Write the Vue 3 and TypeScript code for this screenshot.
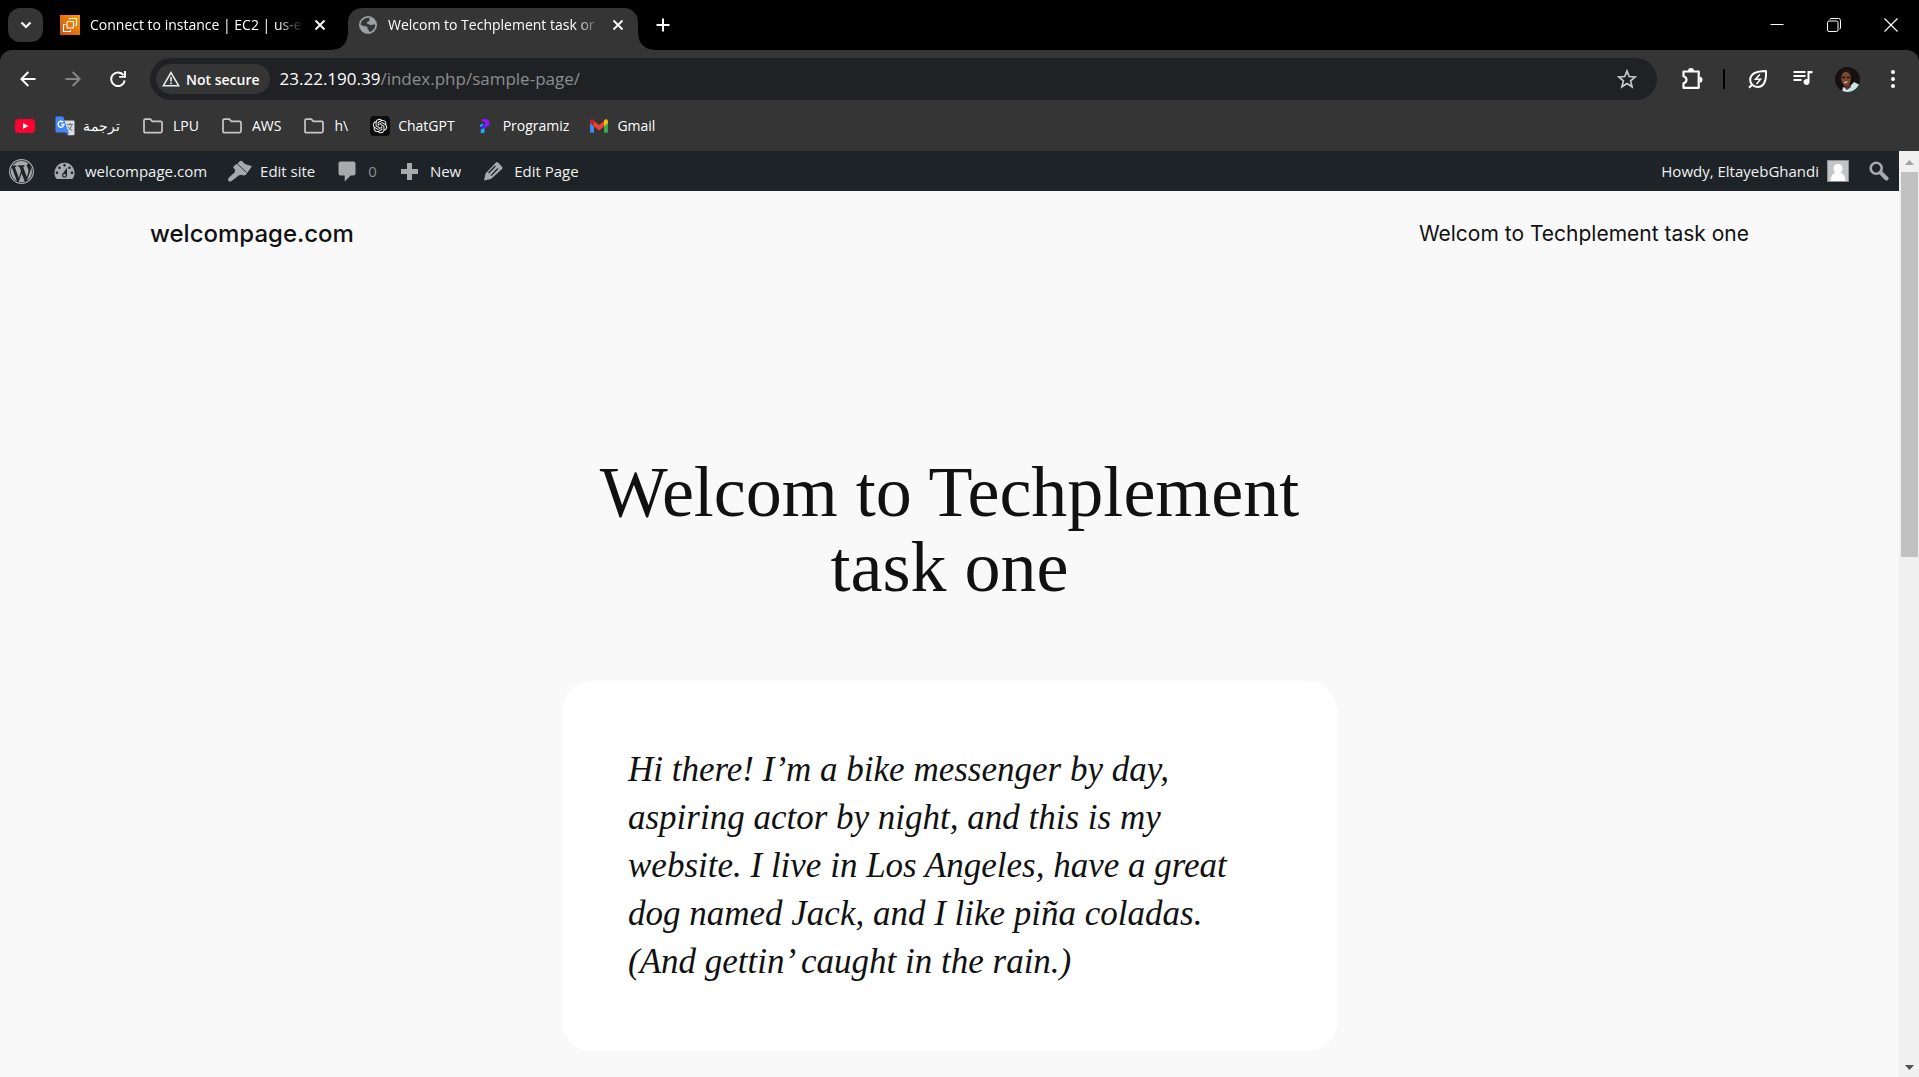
<script setup lang="ts">
import { ref } from 'vue'

interface Tab {
  icon: 'ec2' | 'globe'
  title: string
  active: boolean
}

interface Bookmark {
  icon: 'youtube' | 'translate' | 'folder' | 'chatgpt' | 'programiz' | 'gmail'
  label: string
}

const tabs: Tab[] = [
  { icon: 'ec2', title: 'Connect to instance | EC2 | us-e', active: false },
  { icon: 'globe', title: 'Welcom to Techplement task or', active: true },
]

const bookmarks: Bookmark[] = [
  { icon: 'youtube', label: '' },
  { icon: 'translate', label: 'ترجمة' },
  { icon: 'folder', label: 'LPU' },
  { icon: 'folder', label: 'AWS' },
  { icon: 'folder', label: 'h\\' },
  { icon: 'chatgpt', label: 'ChatGPT' },
  { icon: 'programiz', label: 'Programiz' },
  { icon: 'gmail', label: 'Gmail' },
]

const comments = ref(0)
</script>

<template>
  <div class="browser">
    <div class="tab-strip">
      <button class="tab-search" aria-label="Search tabs">
        <svg width="12" height="12" viewBox="0 0 12 12"><path d="M1.5 3.5 6 8l4.500-4.500" fill="none" stroke="#fff" stroke-width="2.200" /></svg>
      </button>
      <div v-for="tab in tabs" :key="tab.title" class="tab" :class="{ active: tab.active }">
        <svg v-if="tab.icon === 'ec2'" class="favicon" viewBox="0 0 20 20">
          <defs><linearGradient id="ec2" x1="0" y1="1" x2="1" y2="0"><stop offset="0" stop-color="#c8511b" /><stop offset="1" stop-color="#f90" /></linearGradient></defs>
          <path d="M0 0h20v20H0z" fill="url(#ec2)" />
          <g fill="none" stroke="#fff" stroke-width="1.100"><rect x="7" y="6.500" width="6.500" height="6.500" rx="1" /><path d="M9.500 4.500V3.500h7v7h-1.500M5.500 9.500H3.500v7h7V15" /></g>
        </svg>
        <svg v-else class="favicon" viewBox="0 0 20 20">
          <circle cx="10" cy="10" r="9" fill="#9aa0a6" />
          <path d="M11.500 2.800c-.8 1.700.8 2.200-.4 3.300-1.200.9-2.200.6-2.300 1.800 0 1 2.200.9 2.800 1.700.7 1 1.500.7 2.600.2 1.100-.3 1.700 0 3-.5.200 3.600-2.200 7-6 7.800.1-1.200-.3-2.100-1.300-2.900-.8-.7.2-1.800-.9-2.500C7.300 10.800 4.600 11 2.700 9.700 3 5.600 6.700 2.300 11.500 2.800z" fill="#353535" />
        </svg>
        <span class="tab-title">{{ tab.title }}</span>
        <button class="tab-close" aria-label="Close tab">
          <svg width="12" height="12" viewBox="0 0 12 12"><path d="m1.500 1.500 9 9m0-9-9 9" stroke="#fff" stroke-width="1.800" /></svg>
        </button>
      </div>
      <button class="new-tab" aria-label="New tab">
        <svg width="14" height="14" viewBox="0 0 14 14"><path d="M7 .5v13M.5 7h13" stroke="#fff" stroke-width="2" /></svg>
      </button>
      <div class="window-controls">
        <button aria-label="Minimize"><svg width="14" height="14" viewBox="0 0 14 14"><path d="M.5 6.500h13" stroke="#fff" /></svg></button>
        <button aria-label="Restore">
          <svg width="14" height="14" viewBox="0 0 14 14" fill="none" stroke="#fff"><rect x=".5" y="3" width="10.500" height="10.500" rx="1.500" /><path d="M3 1.500Q3 .5 4 .5h7.500q2 0 2 2V10q0 1-1 1" /></svg>
        </button>
        <button aria-label="Close"><svg width="14" height="14" viewBox="0 0 14 14"><path d="m.5.5 13 13m0-13-13 13" stroke="#fff" stroke-width="1.200" /></svg></button>
      </div>
    </div>

    <div class="chrome">
      <div class="toolbar">
        <button class="nav" aria-label="Back"><svg width="16" height="16" viewBox="0 0 16 16"><path d="M15.500 8H2M8.300 1 1.300 8l7 7" fill="none" stroke="#fff" stroke-width="2" /></svg></button>
        <button class="nav" aria-label="Forward"><svg width="16" height="16" viewBox="0 0 16 16"><path d="M.5 8H14M7.700 1l7 7-7 7" fill="none" stroke="#868686" stroke-width="2" /></svg></button>
        <button class="nav" aria-label="Reload">
          <svg width="16" height="16" viewBox="0 0 16 16"><path d="M13.500 4.200A6.800 6.800 0 1 0 14.700 9.500" fill="none" stroke="#fff" stroke-width="2" /><path d="M16 0v6.800H9.200V5H14V0z" fill="#fff" /></svg>
        </button>
        <div class="omnibox">
          <button class="security">
            <svg width="18" height="16" viewBox="0 0 18 16"><path d="M9 1.700 16.600 14.700H1.400z" fill="none" stroke="#e8eaed" stroke-width="1.600" /><path d="M9 6v4.500M9 11.500v1.800" stroke="#e8eaed" stroke-width="1.600" /></svg>
            Not secure
          </button>
          <a class="url" href="#"><span>23.22.190.39</span>/index.php/sample-page/</a>
          <button class="star" aria-label="Bookmark this tab">
            <svg width="20" height="20" viewBox="0 0 20 20"><path d="m10 2 2.200 5.500 6 .5-4.600 3.900 1.500 5.900-5.100-3.200-5.100 3.200 1.500-5.900L1.800 8l6-.5z" fill="none" stroke="#c7c7c7" stroke-width="1.700" /></svg>
          </button>
        </div>
        <div class="actions">
          <button class="act" aria-label="Extensions">
            <svg width="22" height="22" viewBox="0 0 22 22"><path d="M2.500 3.500h15.200v16.300H2.500v-4.600q3-.8 3-3.500t-3-3.500z" fill="none" stroke="#fff" stroke-width="2.200" stroke-linejoin="round" /><path d="M7 3a3 3 0 0 1 6 0zM18.500 8.700a3 3 0 0 1 0 6z" fill="#fff" /></svg>
          </button>
          <span class="divider"></span>
          <button class="act" aria-label="Energy saver">
            <svg width="20" height="20" viewBox="0 0 20 20" fill="none" stroke="#fff" stroke-width="2"><path d="M18 2q.7 16-8.500 16C5 18 2.200 14.500 2.200 11 2.200 4.500 8 2 18 2zM1 18.800l3.500-3.500" stroke-linejoin="round" /><path d="M11.700 5.500 7.500 10.300h5L8.500 15" stroke-width="1.500" /></svg>
          </button>
          <button class="act" aria-label="Media controls">
            <svg width="20" height="20" viewBox="0 0 20 20" fill="#fff"><path d="M.5 2h12v2H.5zM.5 6h12v2H.5zM.5 10h8v2h-8zM14.500 2h5v2.200h-3V13a3 3 0 1 1-2-2.800z" /></svg>
          </button>
          <button class="act" aria-label="Profile">
            <svg width="25" height="25" viewBox="0 0 25 25">
              <defs><clipPath id="face"><circle cx="12.500" cy="12.500" r="12.500" /></clipPath></defs>
              <g clip-path="url(#face)"><path d="M0 0h25v25H0z" fill="#16110f" /><path d="M7 25l1-5 5 1.500L19 15l6 3v7z" fill="#c6e3e8" /><path d="M9 17h6l1 3-4 3-3-3z" fill="#5a3020" /><ellipse cx="11" cy="11.500" rx="4.800" ry="7" fill="#7b4932" /><path d="M6 8q1-6 5.500-6t5 7l-2-3q-4-2-7 0z" fill="#211815" /><path d="M7 10.500h3.500m1.500 0H15" stroke="#1a1413" stroke-width="1.500" /><path d="M8.500 15q2.500 2 4.500-.5z" fill="#f1e5df" /></g>
            </svg>
          </button>
          <button class="act" aria-label="Menu"><svg width="20" height="20" viewBox="0 0 20 20" fill="#fff"><circle cx="10" cy="3" r="2" /><circle cx="10" cy="10" r="2" /><circle cx="10" cy="17" r="2" /></svg></button>
        </div>
      </div>

      <nav class="bookmarks" aria-label="Bookmarks">
        <a v-for="mark in bookmarks" :key="mark.icon + mark.label" href="#" :class="mark.icon" :aria-label="mark.label || 'YouTube'">
          <svg v-if="mark.icon === 'youtube'" viewBox="0 0 20 20"><rect y="3" width="20" height="14" rx="3.500" fill="#ff0033" /><path d="m8 7 5.300 3L8 13z" fill="#fff" /></svg>
          <svg v-else-if="mark.icon === 'translate'" viewBox="0 0 20 20">
            <path d="M8 4.500h10.500q1 0 1 1v12.800q0 1-1 1H13z" fill="#dadce0" /><path d="M9.500 16.500h4.300L13 19.500z" fill="#3367d6" />
            <path d="M1.500.5h6.700L13.500 16.500h-12q-1 0-1-1v-14q0-1 1-1z" fill="#4285f4" />
            <path d="M8.200 6.200A3 3 0 1 0 9 8.500H6.200" fill="none" stroke="#fff" stroke-width="1.300" /><path d="M12 8.500h6M15 7v1.500M17 8.500q-1 4-4 6M13.200 10.500q1.300 3 4.200 4.200" fill="none" stroke="#6b7b80" />
          </svg>
          <svg v-else-if="mark.icon === 'folder'" viewBox="0 0 20 20"><path d="M1 4.500q0-1.300 1.300-1.300h5l2 2.200h8.400q1.300 0 1.300 1.300v8.600q0 1.300-1.300 1.300H2.300Q1 16.600 1 15.300z" fill="none" stroke="#c7c7c7" stroke-width="1.700" /></svg>
          <svg v-else-if="mark.icon === 'chatgpt'" viewBox="0 0 20 20">
            <rect width="20" height="20" rx="4" fill="#0d0d0d" />
            <path transform="translate(2.800 2.800) scale(.6)" fill="#fff" d="M22.282 9.821a5.985 5.985 0 0 0-.516-4.910 6.046 6.046 0 0 0-6.510-2.900A6.065 6.065 0 0 0 4.981 4.182a5.985 5.985 0 0 0-3.998 2.900 6.046 6.046 0 0 0 .743 7.097 5.980 5.980 0 0 0 .510 4.911 6.051 6.051 0 0 0 6.515 2.900A5.985 5.985 0 0 0 13.260 24a6.056 6.056 0 0 0 5.772-4.206 5.990 5.990 0 0 0 3.997-2.900 6.056 6.056 0 0 0-.747-7.073zM13.260 22.430a4.476 4.476 0 0 1-2.876-1.040l.141-.081 4.779-2.758a.795.795 0 0 0 .392-.681v-6.737l2.020 1.168a.071.071 0 0 1 .038.052v5.583a4.504 4.504 0 0 1-4.494 4.494zM3.600 18.304a4.470 4.470 0 0 1-.535-3.014l.142.085 4.783 2.759a.771.771 0 0 0 .780 0l5.843-3.369v2.332a.080.080 0 0 1-.033.062L9.740 19.950a4.500 4.500 0 0 1-6.140-1.646zM2.341 7.896a4.485 4.485 0 0 1 2.366-1.973V11.600a.766.766 0 0 0 .388.676l5.815 3.355-2.020 1.168a.076.076 0 0 1-.071 0l-4.830-2.786A4.504 4.504 0 0 1 2.340 7.872zm16.597 3.855l-5.833-3.387L15.119 7.200a.076.076 0 0 1 .071 0l4.830 2.791a4.494 4.494 0 0 1-.676 8.105v-5.678a.790.790 0 0 0-.407-.667zm2.010-3.023l-.141-.085-4.774-2.782a.776.776 0 0 0-.785 0L9.409 9.230V6.897a.066.066 0 0 1 .028-.061l4.830-2.787a4.500 4.500 0 0 1 6.680 4.660zm-12.640 4.135l-2.020-1.164a.080.080 0 0 1-.038-.057V6.075a4.500 4.500 0 0 1 7.375-3.453l-.142.080L8.704 5.460a.795.795 0 0 0-.393.681zm1.097-2.365l2.602-1.500 2.607 1.500v2.999l-2.597 1.500-2.607-1.500z" />
          </svg>
          <svg v-else-if="mark.icon === 'programiz'" viewBox="0 0 20 20"><path d="M7 3.200q7-1 7.500 2.800.3 4-5 6.300L5.800 14l.4-3.500 4-2.500q2-1.300-3.200-2.500z" fill="#8a16ff" /><path d="M5.800 9.500 9.500 8v4.500L5.800 14z" fill="#4b19e8" /><path d="M5.800 13.500 9.500 12v4.500l-3.700 1z" fill="#16b5f5" /><path d="m5 9 3-1.500v2L5 11z" fill="#00b8ff" /></svg>
          <svg v-else viewBox="0 0 20 20"><path d="M1 5v10.500q0 1.300 1.300 1.300H5V9z" fill="#4285f4" /><path d="M15 9v7.800h2.700q1.300 0 1.300-1.300V5z" fill="#34a853" /><path d="m5 5 5 4 5-4v5.500l-5 4-5-4z" fill="#ea4335" /><path d="M1 7V5.500q0-2.500 2.500-2.200L5 4.600v5.700z" fill="#c5221f" /><path d="M19 7V5.500q0-2.500-2.500-2.200L15 4.600v5.700z" fill="#fbbc04" /></svg>
          <span v-if="mark.label">{{ mark.label }}</span>
        </a>
      </nav>
    </div>

    <div class="viewport">
      <div class="page">
        <nav class="admin-bar" aria-label="Toolbar">
          <a href="#" class="wp" aria-label="About WordPress">
            <svg width="25" height="25" viewBox="0 0 20 20"><circle cx="10" cy="10" r="9.500" fill="none" stroke="#a7aaad" /><path transform="translate(.5 .5) scale(.95)" d="M7.780 15.370L4.370 6.220c.55-.02 1.170-.08 1.170-.08.5-.06.44-1.130-.06-1.110 0 0-1.450.11-2.370.11-.18 0-.37 0-.58-.01C4.120 2.690 6.870 1.110 10 1.110c2.330 0 4.450.87 6.050 2.340-.68-.11-1.650.39-1.650 1.580 0 .74.45 1.360.9 2.100.35.61.55 1.360.55 2.460 0 1.490-1.400 5-1.400 5l-3.030-8.370c.54-.02.82-.17.82-.17.5-.05.44-1.250-.06-1.220 0 0-1.440.12-2.380.12-.87 0-2.330-.12-2.330-.12-.5-.03-.56 1.200-.06 1.220l.92.08 1.260 3.410zM17.410 10c.24-.64.74-1.870.43-4.250.7 1.290 1.050 2.710 1.050 4.250 0 3.290-1.730 6.240-4.400 7.780.97-2.590 1.940-5.200 2.920-7.780zM6.100 18.090C3.120 16.650 1.110 13.530 1.110 10c0-1.300.23-2.480.72-3.590C3.250 10.300 4.670 14.200 6.100 18.090zm4.030-6.630l2.580 6.980c-.86.29-1.760.45-2.710.45-.79 0-1.570-.11-2.290-.33.81-2.380 1.620-4.740 2.420-7.100z" /></svg>
          </a>
          <a href="#">
            <svg width="25" height="25" viewBox="0 0 20 20"><path d="M3.760 16h12.480A7.998 7.998 0 0 0 10 3a7.998 7.998 0 0 0-6.240 13zM10 4c.55 0 1 .45 1 1s-.45 1-1 1-1-.45-1-1 .45-1 1-1zM6 6c.55 0 1 .45 1 1s-.45 1-1 1-1-.45-1-1 .45-1 1-1zm8 0c.55 0 1 .45 1 1s-.45 1-1 1-1-.45-1-1 .45-1 1-1zm-5.370 5.550L12 7v6c0 1.100-.9 2-2 2s-2-.9-2-2c0-.57.24-1.080.63-1.450zM4 10c.55 0 1 .45 1 1s-.45 1-1 1-1-.45-1-1 .45-1 1-1zm12 0c.55 0 1 .45 1 1s-.45 1-1 1-1-.45-1-1 .45-1 1-1zm-5 3c0-.55-.45-1-1-1s-1 .45-1 1 .45 1 1 1 1-.45 1-1z" fill-rule="evenodd" /></svg>
            <span>welcompage.com</span>
          </a>
          <a href="#">
            <svg width="25" height="25" viewBox="0 0 25 25"><path d="M10.500 4.500 13 2q1.200-.8 2.200.2L18 5l7 2.200-6 8.300q-2 2-4.500.3l-2.500.4-7 5.500q-2.300 1.600-3.500.2t.5-3.400L8 13l-.2-2.800L6 8.500q1.800-3 4.500-4z" /><path d="m10 4.500 9.500 9" stroke="#1d2327" stroke-width=".9" /></svg>
            <span>Edit site</span>
          </a>
          <a href="#" class="muted">
            <svg width="25" height="25" viewBox="0 0 25 25"><path d="M5.500 2.500h13q2 0 2 2v10q0 2-2 2h-2.800l-6 6v-6H5.500q-2 0-2-2v-10q0-2 2-2z" /></svg>
            <span>{{ comments }}</span>
          </a>
          <a href="#">
            <svg width="25" height="25" viewBox="0 0 25 25"><path d="M10 4h5v6h6v5h-6v6h-5v-6H4v-5h6z" /></svg>
            <span>New</span>
          </a>
          <a href="#">
            <svg width="25" height="25" viewBox="0 0 25 25"><path d="m17 3.500 4 4.200q1 1.200 0 2.200L10 20l-7 1.500 1.500-7L14.700 3.700q1.200-1.200 2.300-.2z" /><path d="m7.500 14 7-7M10 16.500l7-7" stroke="#1d2327" stroke-width="1.200" /></svg>
            <span>Edit Page</span>
          </a>
          <a href="#" class="account">
            <span>Howdy, EltayebGhandi</span>
            <svg class="avatar" width="22" height="22" viewBox="0 0 22 22"><path d="M0 0h22v22H0z" fill="#8c8f94" /><path d="M1 1h20v20H1z" fill="#c3c4c7" /><path d="M11 4q4.500 0 4.500 4.700 0 2.300-1.800 4 4.300 1 4.800 8.300h-15q.5-7.300 4.800-8.300-1.800-1.700-1.800-4Q6.500 4 11 4z" fill="#fff" /></svg>
          </a>
          <button class="search" aria-label="Search"><svg width="20" height="20" viewBox="0 0 20 20"><circle cx="7.200" cy="7.200" r="5.500" fill="none" stroke="#a7aaad" stroke-width="2.600" /><path d="m11.500 11.500 6 6" stroke="#a7aaad" stroke-width="4" stroke-linecap="round" /></svg></button>
        </nav>

        <header class="site-header">
          <a class="site-title" href="#">welcompage.com</a>
          <a class="site-link" href="#">Welcom to Techplement task one</a>
        </header>

        <main>
          <h1>Welcom to Techplement task one</h1>
          <blockquote>
            Hi there! I’m a bike messenger by day,<br />
            aspiring actor by night, and this is my<br />
            website. I live in Los Angeles, have a great<br />
            dog named Jack, and I like piña coladas.<br />
            (And gettin’ caught in the rain.)
          </blockquote>
        </main>
      </div>
      <div class="scrollbar">
        <svg width="20" height="21" viewBox="0 0 20 21"><path d="M6 14h9l-4.500-5z" fill="#a3a3a3" /></svg>
        <div class="track"><div class="thumb"></div></div>
        <svg width="20" height="20" viewBox="0 0 20 20"><path d="M6 8h9l-4.500 5z" fill="#505050" /></svg>
      </div>
    </div>
  </div>
</template>

<style>
body {
  margin: 0;
  overflow: hidden;
}
</style>

<style scoped>
.browser {
  display: flex;
  flex-direction: column;
  height: 100vh;
  background: #000;
  color: #fff;
  font-family: "Open Sans", "Noto Sans", sans-serif;
  font-size: 14px;
}

button {
  display: flex;
  align-items: center;
  justify-content: center;
  padding: 0;
  border: 0;
  background: none;
  color: inherit;
  font: inherit;
}

a {
  color: inherit;
  text-decoration: none;
}

svg {
  display: block;
  flex: none;
}

.tab-strip {
  display: flex;
  align-items: flex-start;
  height: 50px;
  flex: none;
}

.tab-search {
  width: 35px;
  height: 34px;
  margin: 8px 7px 0 8px;
  border-radius: 12px;
  background: #353535;
}

.tab {
  position: relative;
  display: flex;
  align-items: center;
  width: 290px;
  height: 34px;
  margin-top: 8px;
  padding: 0 10px;
  box-sizing: border-box;
}

.tab.active {
  height: 42px;
  margin-left: 8px;
  padding-bottom: 8px;
  border-radius: 14px 14px 0 0;
  background: #353535;
}

.tab.active::before,
.tab.active::after {
  content: "";
  position: absolute;
  bottom: 0;
  width: 15px;
  height: 15px;
}

.tab.active::before {
  right: 100%;
  background: radial-gradient(circle at 0 0, transparent 14px, #353535 15px);
}

.tab.active::after {
  left: 100%;
  background: radial-gradient(circle at 100% 0, transparent 14px, #353535 15px);
}

.favicon {
  width: 20px;
  height: 20px;
}

.tab-title {
  flex: 1;
  margin-left: 10px;
  white-space: nowrap;
  line-height: 20px;
  mask-image: linear-gradient(to right, #000 85%, transparent 97%);
}

.tab-close {
  width: 20px;
  height: 20px;
}

.new-tab {
  width: 34px;
  height: 34px;
  margin: 8px 0 0 8px;
}

.window-controls {
  display: flex;
  margin-left: auto;
}

.window-controls button {
  width: 57px;
  height: 49px;
}

.chrome {
  flex: none;
  border-radius: 12px 12px 0 0;
  background: #353535;
}

.toolbar {
  display: flex;
  align-items: center;
  height: 42px;
  padding: 8px 4px 0 5px;
}

.nav {
  width: 45px;
  height: 42px;
}

.omnibox {
  display: flex;
  flex: 1;
  align-items: center;
  height: 42px;
  margin-left: 10px;
  padding: 0 20px 0 6px;
  box-sizing: border-box;
  border-radius: 21px;
  background: #202124;
}

.security {
  gap: 6px;
  height: 30px;
  padding: 0 10px 0 6px;
  border-radius: 15px;
  background: #353535;
  font-weight: 600;
}

.url {
  flex: 1;
  margin-left: 10px;
  color: #8c8d90;
  font-size: 17px;
  line-height: 24px;
}

.url span {
  color: #fff;
}

.actions {
  display: flex;
  align-items: center;
}

.act {
  width: 45px;
  height: 36px;
}

.actions .act:first-child {
  margin-left: 12px;
}

.divider {
  width: 2px;
  height: 20px;
  margin: 0 10px 0 9px;
  background: #000;
}

.bookmarks {
  display: flex;
  align-items: center;
  gap: 20px;
  height: 51px;
  padding: 0 15px;
}

.bookmarks a {
  display: flex;
  align-items: center;
  gap: 8px;
  line-height: 20px;
}

.bookmarks svg {
  width: 20px;
  height: 20px;
}

.bookmarks .folder {
  padding-left: 3px;
  gap: 10px;
}

.bookmarks .chatgpt {
  padding-left: 2px;
}

.viewport {
  display: flex;
  flex: 1;
  min-height: 0;
}

.page {
  flex: 1;
  overflow: hidden;
  background: #f9f9f9;
  color: #111;
}

.admin-bar {
  display: flex;
  align-items: center;
  height: 40px;
  padding: 0 10px 0 9px;
  background: #1d2327;
  color: #f0f0f1;
  font-size: 15px;
  line-height: 24px;
}

.admin-bar a {
  display: flex;
  align-items: center;
  gap: 8px;
  margin-right: 20px;
}

.admin-bar .wp {
  margin-right: 18px;
}

.admin-bar svg {
  fill: #a7aaad;
}

.admin-bar .muted {
  color: #8c8f94;
}

.admin-bar .account {
  margin: 0 20px 0 auto;
}

.site-header {
  display: flex;
  align-items: center;
  justify-content: space-between;
  height: 86px;
  padding: 0 150px;
  font-family: Inter, sans-serif;
}

.site-title {
  font-size: 24px;
  font-weight: 500;
  line-height: 30px;
}

.site-link {
  font-size: 21px;
  line-height: 30px;
}

main {
  max-width: 775px;
  margin: 0 auto;
  padding-top: 178px;
  font-family: "Liberation Serif", serif;
}

h1 {
  margin: 0 0 76px;
  font-size: 72px;
  font-weight: 400;
  line-height: 75px;
  text-align: center;
}

blockquote {
  margin: 0;
  padding: 65px 66px;
  border-radius: 30px;
  background: #fff;
  font-size: 35px;
  font-style: italic;
  line-height: 48px;
  white-space: nowrap;
}

.scrollbar {
  display: flex;
  flex-direction: column;
  width: 20px;
  flex: none;
  background: #f0f0f0;
}

.track {
  flex: 1;
  padding: 0 1px 0 2px;
}

.thumb {
  height: 43.5%;
  background: #c1c1c1;
}
</style>
